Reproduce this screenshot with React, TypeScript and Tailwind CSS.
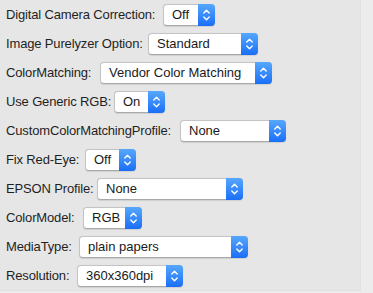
const rows: { label: string; value: string; left: number; width: number }[] = [
  { label: "Digital Camera Correction:", value: "Off", left: 163, width: 52 },
  { label: "Image Purelyzer Option:", value: "Standard", left: 148, width: 110 },
  { label: "ColorMatching:", value: "Vendor Color Matching", left: 100, width: 172 },
  { label: "Use Generic RGB:", value: "On", left: 114, width: 51 },
  { label: "CustomColorMatchingProfile:", value: "None", left: 180, width: 106 },
  { label: "Fix Red-Eye:", value: "Off", left: 85, width: 51 },
  { label: "EPSON Profile:", value: "None", left: 97, width: 146 },
  { label: "ColorModel:", value: "RGB", left: 83, width: 59 },
  { label: "MediaType:", value: "plain papers", left: 79, width: 169 },
  { label: "Resolution:", value: "360x360dpi", left: 77, width: 106 },
];

function Chevrons() {
  return (
    <svg width="9" height="14" viewBox="0 0 9 14" fill="none">
      <path d="M1.8 5 L4.5 2.3 L7.2 5" stroke="white" strokeWidth="1.4" strokeLinecap="round" strokeLinejoin="round" />
      <path d="M1.8 9 L4.5 11.7 L7.2 9" stroke="white" strokeWidth="1.4" strokeLinecap="round" strokeLinejoin="round" />
    </svg>
  );
}

function PopUp({ value, width }: { value: string; width: number }) {
  return (
    <div
      className="flex h-[22px] shrink-0 items-stretch rounded-[4px] border border-[#c4c4c4] border-b-[#a9a9a9] bg-white shadow-[0_0.5px_1px_rgba(0,0,0,0.1)]"
      style={{ width }}
    >
      <span className="flex-1 truncate pl-[8px] text-[13px] leading-[20px] text-[#1a1a1a]">{value}</span>
      <span className="-my-px -mr-px flex w-[17px] items-center justify-center rounded-r-[4px] bg-gradient-to-b from-[#56a7fc] to-[#1a6ef7]">
        <Chevrons />
      </span>
    </div>
  );
}

export default function App() {
  return (
    <div className="h-[293px] w-[373px] bg-[#ececec] font-['Liberation_Sans',Arial,sans-serif]">
      <div className="flex h-[291px] w-[361px] flex-col gap-[7px] border-r border-b border-[#e0e0e0] bg-[#e6e6e6] pt-[4px] pl-[6px]">
        {rows.map((r) => (
          <div key={r.label} className="flex h-[22px] items-center">
            {/* label column sized so each popup starts where it does in the dialog */}
            <span className="shrink-0 overflow-visible whitespace-nowrap text-[13px] tracking-[-0.15px] text-[#1f1f1f]" style={{ width: r.left - 6 }}>
              {r.label}
            </span>
            <PopUp value={r.value} width={r.width} />
          </div>
        ))}
      </div>
    </div>
  );
}
